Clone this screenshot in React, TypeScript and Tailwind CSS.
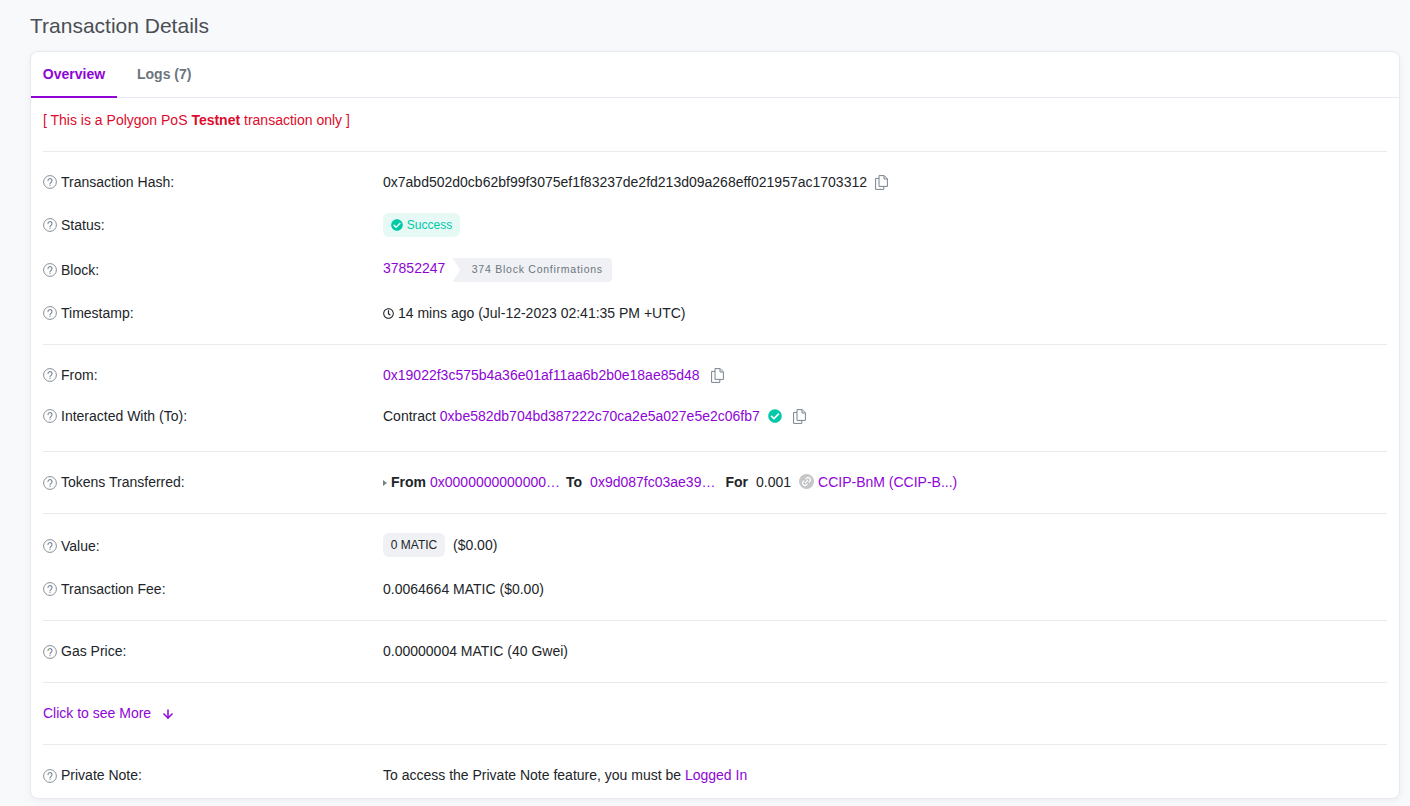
import { ArrowDown, Link2 } from 'lucide-react'
import type { ReactNode } from 'react'
import { FaCheckCircle, FaRegClock } from 'react-icons/fa'

interface RowProps {
  label: string
  height: string
  children: ReactNode
}

function HelpIcon() {
  return (
    <svg width="14" height="14" viewBox="0 0 14 14" fill="none" stroke="#77838f" className="shrink-0">
      <circle cx="7" cy="7" r="6.4" strokeWidth="0.9" />
      <path d="M5 5.6a2 2 0 1 1 3.2 1.6C7.4 7.8 7 8 7 9" strokeWidth="1.1" strokeLinecap="round" />
      <circle cx="7" cy="10.6" r="0.6" fill="#77838f" stroke="none" />
    </svg>
  )
}

function Row({ label, height, children }: RowProps) {
  return (
    <div className={`flex items-center ${height}`}>
      <div className="flex w-[340px] shrink-0 items-center gap-1 text-[#212529]">
        <HelpIcon />
        <span>{label}</span>
      </div>
      <div className="flex min-w-0 items-center">{children}</div>
    </div>
  )
}

function Divider() {
  return <div className="h-px bg-[#e9ecef]" />
}

function CopyIcon({ className }: { className: string }) {
  return (
    <svg width="13" height="15" viewBox="0 0 13 15" fill="none" stroke="#77838f" strokeWidth="1" className={className}>
      <path d="M4 .6h5.2l3.2 3.2v7.6H4z" />
      <path d="M9 .8v3.2h3.2" />
      <path d="M4 3.4H.6v11h8.2v-3" />
    </svg>
  )
}

function Link({ children }: { children: ReactNode }) {
  return <a className="text-[#8e05d6]">{children}</a>
}

export default function App() {
  return (
    <div className="h-[806px] overflow-hidden bg-[#f8f9fa] pl-[30px] pr-[10px] font-['Liberation_Sans',Arial,sans-serif] text-[14px] text-[#212529]">
      <h1 className="flex h-[51px] items-center text-[21px] text-[#4a4f55]">Transaction Details</h1>

      <div className="h-[748px] rounded-lg border border-[#e7eaf3] bg-white shadow-[0_2px_6px_rgba(189,197,209,0.2)]">
        <div className="flex h-[46px] border-b border-[#e7eaf3] text-[14px] font-bold">
          <div className="-mb-px flex h-[46px] w-[86px] items-center justify-center border-b-2 border-[#8e05d6] text-[#8e05d6]">
            Overview
          </div>
          <div className="flex items-center pl-5 text-[#6c757e]">Logs (7)</div>
        </div>

        <div className="px-3">
          <div className="flex h-[53px] items-center pb-[8px] text-[#de0a2b]">
            <span>
              [ This is a Polygon PoS <b>Testnet</b> transaction only ]
            </span>
          </div>
          <Divider />

          <div className="pt-2 pb-3">
            <Row label="Transaction Hash:" height="h-11">
              <span>0x7abd502d0cb62bf99f3075ef1f83237de2fd213d09a268eff021957ac1703312</span>
              <CopyIcon className="ml-2" />
            </Row>
            <Row label="Status:" height="h-[42px]">
              <span className="flex h-6 w-[77px] items-center justify-center gap-1 rounded-md bg-[#e6f9f5] text-[12px] text-[#00c9a7]">
                <FaCheckCircle size={12} />
                <span>Success</span>
              </span>
            </Row>
            <Row label="Block:" height="h-12">
              <span className="-mt-[3px]">
                <Link>37852247</Link>
              </span>
              <span className="ml-[7px] flex h-6 w-[160px] items-center justify-center rounded-r bg-[#eff1f4] pl-[10px] text-[10.5px] tracking-[0.75px] text-[#6c757e] [clip-path:polygon(0_0,100%_0,100%_100%,0_100%,8px_50%)]">
                374 Block Confirmations
              </span>
            </Row>
            <Row label="Timestamp:" height="h-[38px]">
              <FaRegClock size={11} className="mr-1" />
              <span>14 mins ago (Jul-12-2023 02:41:35 PM +UTC)</span>
            </Row>
          </div>
          <Divider />

          <div className="pt-[9px] pb-[15px]">
            <Row label="From:" height="h-[42px]">
              <Link>0x19022f3c575b4a36e01af11aa6b2b0e18ae85d48</Link>
              <CopyIcon className="ml-[11px]" />
            </Row>
            <Row label="Interacted With (To):" height="h-10">
              <span>Contract&nbsp;</span>
              <Link>0xbe582db704bd387222c70ca2e5a027e5e2c06fb7</Link>
              <FaCheckCircle size={14} className="ml-2 text-[#00c9a7]" />
              <CopyIcon className="ml-[11px]" />
            </Row>
          </div>
          <Divider />

          <Row label="Tokens Transferred:" height="h-[61px]">
            <span className="mr-1 h-0 w-0 border-y-[3px] border-l-4 border-y-transparent border-l-[#77838f]" />
            <b>From</b>
            <span className="ml-1 text-[#8e05d6]">0x0000000000000…</span>
            <b className="ml-[6px]">To</b>
            <span className="ml-2 text-[#8e05d6]">0x9d087fc03ae39…</span>
            <b className="ml-[10px]">For</b>
            <span className="ml-2">0.001</span>
            <span className="mr-1 ml-2 flex size-[15px] -translate-y-px items-center justify-center rounded-full bg-[#c4c6c8]">
              <Link2 size={11} strokeWidth={2.5} className="-rotate-45 text-white" />
            </span>
            <Link>CCIP-BnM (CCIP-B...)</Link>
          </Row>
          <Divider />

          <div className="pt-[11px] pb-[9px]">
            <Row label="Value:" height="h-[42px]">
              <span className="flex h-6 w-[62px] -translate-y-px items-center justify-center rounded-md bg-[#eff1f4] text-[12px]">0 MATIC</span>
              <span className="ml-2 -translate-y-px">($0.00)</span>
            </Row>
            <Row label="Transaction Fee:" height="h-11">
              <span>0.0064664 MATIC ($0.00)</span>
            </Row>
          </div>
          <Divider />

          <Row label="Gas Price:" height="h-[61px]">
            <span>0.00000004 MATIC (40 Gwei)</span>
          </Row>
          <Divider />

          <div className="flex h-[61px] items-center text-[#8e05d6]">
            <span>Click to see More</span>
            <ArrowDown size={14} strokeWidth={2.6} className="ml-[10px]" />
          </div>
          <Divider />

          <div className="pt-2">
            <Row label="Private Note:" height="h-[45px]">
              <span>To access the Private Note feature, you must be&nbsp;</span>
              <Link>Logged In</Link>
            </Row>
          </div>
        </div>
      </div>
    </div>
  )
}
